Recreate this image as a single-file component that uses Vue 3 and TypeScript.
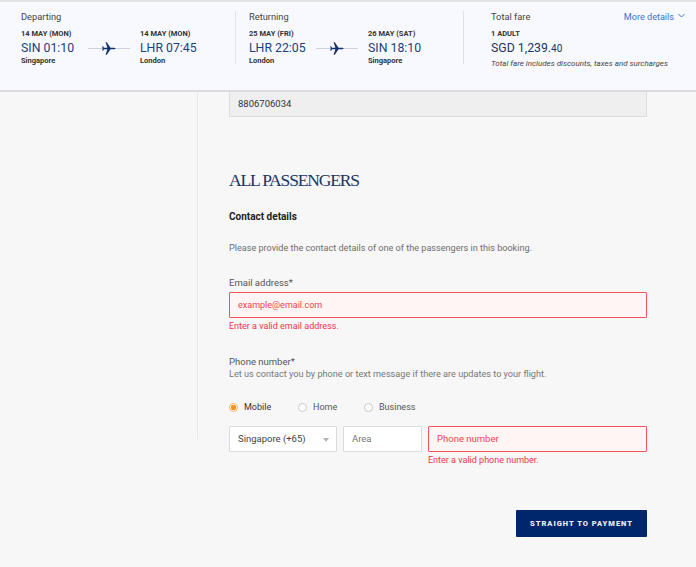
<script setup lang="ts">
interface Leg { date: string; time: string; city: string }
interface Seg { title: string; from: Leg; to: Leg }
const segs: Seg[] = [
  { title: 'Departing', from: { date: '14 MAY (MON)', time: 'SIN 01:10', city: 'Singapore' }, to: { date: '14 MAY (MON)', time: 'LHR 07:45', city: 'London' } },
  { title: 'Returning', from: { date: '25 MAY (FRI)', time: 'LHR 22:05', city: 'London' }, to: { date: '26 MAY (SAT)', time: 'SIN 18:10', city: 'Singapore' } },
]
const kinds = ['Mobile', 'Home', 'Business']
</script>

<template>
  <div class="page">
    <header class="bar">
      <section v-for="(s, i) in segs" :key="s.title" class="seg" :class="'seg' + i">
        <div class="title">{{ s.title }}</div>
        <div class="legs">
          <div class="leg">
            <div class="date">{{ s.from.date }}</div>
            <div class="time">{{ s.from.time }}</div>
            <div class="city">{{ s.from.city }}</div>
          </div>
          <div class="route">
            <svg width="14" height="13" viewBox="0 0 14 13"><path fill="#12306c" d="M.2 4.200h.8l1 1.500h3.400L3.600.3h1.200l3.700 5.400h3.300c1 0 1.800.3 1.800.8s-.8.8-1.800.8H8.500l-3.700 5.400H3.600l1.800-5.400H2L1 8.800H.2l.5-2.300z"/></svg>
          </div>
          <div class="leg">
            <div class="date">{{ s.to.date }}</div>
            <div class="time">{{ s.to.time }}</div>
            <div class="city">{{ s.to.city }}</div>
          </div>
        </div>
      </section>
      <section class="fare">
        <div class="fare-top">
          <div class="title">Total fare</div>
          <a class="more">More details<svg width="7" height="5" viewBox="0 0 7 5"><path d="M.5 1l3 3 3-3" fill="none" stroke="#3f74d8" stroke-width="1"/></svg></a>
        </div>
        <div class="date adult">1 ADULT</div>
        <div class="time price">SGD 1,239.<small>40</small></div>
        <div class="note">Total fare includes discounts, taxes and surcharges</div>
      </section>
    </header>

    <main class="main">
      <div class="form">
        <div class="input readonly">8806706034</div>

        <h1>ALL PASSENGERS</h1>
        <h2>Contact details</h2>
        <p class="hint">Please provide the contact details of one of the passengers in this booking.</p>

        <label class="label email-label">Email address*</label>
        <div class="input error email">example@email.com</div>
        <div class="err">Enter a valid email address.</div>

        <label class="label phone-label">Phone number*</label>
        <div class="sub">Let us contact you by phone or text message if there are updates to your flight.</div>

        <div class="radios">
          <div v-for="(k, i) in kinds" :key="k" class="radio" :class="{ on: i === 0 }">
            <span class="dot"></span><span>{{ k }}</span>
          </div>
        </div>

        <div class="phone">
          <div class="input select">Singapore (+65)<span class="caret"></span></div>
          <div class="input area">Area</div>
          <div class="num">
            <div class="input error">Phone number</div>
            <div class="err">Enter a valid phone number.</div>
          </div>
        </div>

        <div class="actions"><button class="pay">STRAIGHT TO PAYMENT</button></div>
      </div>
    </main>
  </div>
</template>

<style>
html, body { margin: 0; background: #f7f7f7; }
</style>

<style scoped>
.page {
  width: 696px;
  height: 567px;
  overflow: hidden;
  background: #f7f7f7;
  font-family: Roboto, "Liberation Sans", sans-serif;
  color: #333;
  box-sizing: border-box;
}
.bar {
  height: 92px;
  box-sizing: border-box;
  background: #f7f9fe;
  border-top: 2px solid #e4e4e6;
  border-bottom: 2px solid #dcdcde;
  display: flex;
  padding: 9px 0 0 21px;
}
.seg { height: 53px; flex: none; box-sizing: border-box; }
.seg0 { width: 215px; border-right: 1px solid #dfe1e6; }
.seg1 { width: 228px; padding-left: 13px; border-right: 1px solid #dfe1e6; }
.title { font-size: 9.300px; line-height: 12px; color: #444; }
.legs { display: flex; margin-top: 6px; }
.leg { width: 0; white-space: nowrap; flex: none; }
.leg:first-child { width: 67px; }
.date { font-size: 7.500px; font-weight: 700; line-height: 10px; color: #333; }
.time { font-size: 12.300px; line-height: 16px; color: #1c3f7c; margin-top: 1px; }
.city { font-size: 7.500px; font-weight: 700; line-height: 10px; color: #333; }
.route {
  width: 42px;
  margin-right: 10px;
  flex: none;
  margin-top: 12px;
  height: 14px;
  display: flex;
  justify-content: center;
  align-items: center;
  background: linear-gradient(#cdd3de, #cdd3de) center / 100% 1px no-repeat;
}
.fare { margin-left: 27px; flex: none; width: 194px; }
.fare-top { display: flex; justify-content: space-between; }
.more { font-size: 9.100px; line-height: 12px; color: #3f74d8; white-space: nowrap; }
.more svg { margin-left: 4px; vertical-align: 2px; }
.adult { margin-top: 6px; }
.price { color: #1b3564; }
.price small { font-size: 10px; }
.note { font-size: 8px; font-style: italic; line-height: 10px; margin-top: 2px; color: #444; white-space: nowrap; }

.main { height: 475px; padding-left: 198px; position: relative; }
.main::before {
  content: "";
  position: absolute;
  left: 197px;
  top: 0;
  height: 347px;
  width: 1px;
  background: #e8e8e8;
}
.form { width: 418px; margin-left: 31px; }
.input {
  box-sizing: border-box;
  height: 26px;
  border: 1px solid #dcdcdc;
  background: #fff;
  font-size: 9.500px;
  line-height: 24px;
  padding: 0 8px;
  border-radius: 1px;
  color: #444;
}
.readonly { background: #efefef; border-top: 0; height: 25px; color: #333; }
h1 {
  margin: 53px 0 0;
  font-family: "Liberation Serif", serif;
  font-weight: 400;
  font-size: 17.500px;
  line-height: 20px;
  letter-spacing: -1.150px;
  color: #1b3564;
}
h2 { margin: 20px 0 0; font-size: 10px; line-height: 14px; font-weight: 700; color: #222; }
.hint { margin: 18px 0 0; font-size: 9.100px; line-height: 12px; color: #6e6e6e; }
.label { display: block; font-size: 9.500px; line-height: 12px; color: #555; }
.email-label { margin-top: 23px; }
.email-label + .input { margin-top: 3px; }
.error { background: #fff5f5; border-color: #f4555d; color: #f0444e; }
.email { font-size: 9px; }
.err { font-size: 9px; line-height: 12px; color: #f5334a; margin-top: 2px; }
.phone-label { margin-top: 24px; }
.sub { font-size: 9.150px; line-height: 12px; color: #777; }
.radios { display: flex; margin-top: 21px; height: 12px; }
.radio { display: flex; align-items: center; font-size: 9px; color: #555; width: 69px; white-space: nowrap; }
.radio:nth-child(2) { width: 66px; }
.radio.on { color: #333; }
.dot {
  box-sizing: border-box;
  width: 9px;
  height: 9px;
  border-radius: 50%;
  border: 1px solid #c8c8c8;
  background: #fff;
  margin-right: 6px;
}
.on .dot { border-color: #f4b26a; background: radial-gradient(circle, #f7941d 0 2.500px, #fff 3px); }
.phone { display: flex; gap: 6px; margin-top: 13px; align-items: flex-start; }
.select { width: 108px; flex: none; position: relative; color: #444; }
.caret {
  position: absolute;
  right: 7px;
  top: 11px;
  border: 3px solid transparent;
  border-top: 4px solid #b5b5b5;
  border-bottom: 0;
}
.area { width: 79px; flex: none; color: #777; }
.num { flex: 1; }
.actions { display: flex; justify-content: flex-end; margin-top: 44px; }
.pay {
  width: 131px;
  height: 27px;
  background: #00266b;
  border: 0;
  border-radius: 1px;
  color: #e8ecf4;
  font-family: Roboto, "Liberation Sans", sans-serif;
  font-size: 7.500px;
  font-weight: 900;
  letter-spacing: 1px;
  padding: 0;
}
</style>
